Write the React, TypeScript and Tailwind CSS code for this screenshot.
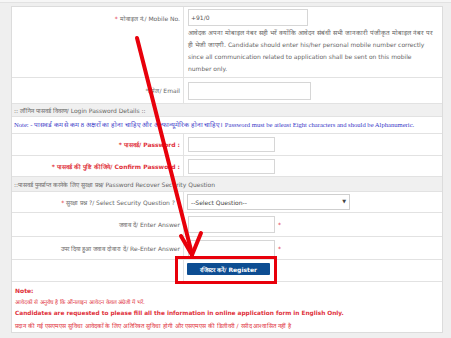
import React from 'react';

const font = "font-['DejaVu_Sans',sans-serif]";

const Label = ({ children, className = '' }: { children: React.ReactNode; className?: string }) => (
    <div className={`w-[172px] shrink-0 border-r border-[#e2e2e2] flex items-center justify-end pr-[3px] text-[6px] text-[#666] ${className}`}>
        {children}
    </div>
);

const Input = ({ w = 'w-[87px]', h = 'h-[16px]', children }: { w?: string; h?: string; children?: React.ReactNode }) => (
    <div className={`${w} ${h} border border-[#d6d6d6] bg-white flex items-center px-[2px] text-[6px] text-[#555]`}>{children}</div>
);

const App = () => {
    return (
        <div className={`relative w-[451px] h-[338px] overflow-hidden bg-[#efefef] ${font}`}>
            <div className="h-[3px] border-b border-[#e2e2e2] bg-[#f6f6f6]" />
            <div className="ml-[11px] mt-[3px] w-[432px] bg-white border border-[#dcdcdc] flex flex-col">
                {/* mobile */}
                <div className="flex h-[71px] border-b border-[#e2e2e2]">
                    <Label className="items-start pt-[7px]">
                        <span className="text-[#e0303a] mr-[2px]">*</span> मोबाइल नं./ Mobile No.
                    </Label>
                    <div className="flex-1 pl-[4px] pt-[2px]">
                        <Input w="w-[120px]" h="h-[17px]">+91/0</Input>
                        <p className="mt-[1px] text-[6px] leading-[12px] text-[#666] whitespace-nowrap">
                            <span className="text-[6.3px]">आवेदक अपना मोबाइल नंबर सही भरें क्योंकि आवेदन संबंधी सभी जानकारी पंजीकृत मोबाइल नंबर पर</span>
                            <br />
                            <span className="text-[6.3px]">ही भेजी जाएगी.</span> Candidate should enter his/her personal mobile number correctly
                            <br />
                            since all communication related to application shall be sent on this mobile
                            <br />
                            number only.
                        </p>
                    </div>
                </div>
                {/* email */}
                <div className="flex h-[26px] border-b border-[#e2e2e2]">
                    <Label>*ईमेल/ Email</Label>
                    <div className="flex-1 pl-[4px] flex items-center">
                        <Input w="w-[123px]" h="h-[18px]" />
                    </div>
                </div>
                <div className="h-[13px] bg-[#f0f0f0] border-b border-[#e2e2e2] flex items-center pl-[2px] text-[6px] text-[#666]">
                    :: लॉगिन पासवर्ड विवरण/ Login Password Details ::
                </div>
                <div className="h-[17px] border-b border-[#e2e2e2] flex items-center pl-[2px] text-[6.6px] text-[#3838c8] font-['Liberation_Serif',serif] whitespace-nowrap">
                    Note: - पासवर्ड कम से कम 8 अक्षरों का होना चाहिए और अल्फान्यूमेरिक होना चाहिए। Password must be atleast Eight characters and should be Alphanumeric.
                </div>
                {/* password */}
                <div className="flex h-[22px] border-b border-[#e2e2e2]">
                    <Label className="text-[#e0303a] font-bold">* पासवर्ड/ Password :</Label>
                    <div className="flex-1 pl-[4px] flex items-center">
                        <Input h="h-[15px]" />
                    </div>
                </div>
                <div className="flex h-[21px] border-b border-[#e2e2e2]">
                    <Label className="text-[#e0303a] font-bold">* पासवर्ड की पुष्टि कीजिये/ Confirm Password :</Label>
                    <div className="flex-1 pl-[4px] flex items-center">
                        <Input h="h-[15px]" />
                    </div>
                </div>
                <div className="h-[15px] bg-[#f0f0f0] border-b border-[#e2e2e2] flex items-center pl-[2px] text-[6px] text-[#666]">
                    ::पासवर्ड पुनर्प्राप्त करनेके लिए सुरक्षा प्रश्न/ Password Recover Security Question
                </div>
                {/* security */}
                <div className="flex h-[21px] border-b border-[#e2e2e2]">
                    <Label className="pr-[8px]">
                        <span className="text-[#e0303a] mr-[2px]">*</span> सुरक्षा प्रश्न ?/ Select Security Question ?
                    </Label>
                    <div className="flex-1 pl-[3px] flex items-center">
                        <div className="w-[163px] h-[16px] border border-[#cfcfcf] bg-white flex items-center justify-between px-[3px] text-[6px] text-[#444]">
                            <span>--Select Question--</span>
                            <span className="text-[5px]">▼</span>
                        </div>
                    </div>
                </div>
                <div className="flex h-[24px] border-b border-[#e2e2e2]">
                    <Label>जवाब दें/ Enter Answer</Label>
                    <div className="flex-1 pl-[4px] flex items-center gap-[3px]">
                        <Input h="h-[17px]" />
                        <span className="text-[#e0303a] text-[6px]">*</span>
                    </div>
                </div>
                <div className="flex h-[23px] border-b border-[#e2e2e2]">
                    <Label>उपर दिया हुआ जवाब दोबारा दें/ Re-Enter Answer</Label>
                    <div className="flex-1 pl-[4px] flex items-center gap-[3px]">
                        <Input h="h-[17px]" />
                        <span className="text-[#e0303a] text-[6px]">*</span>
                    </div>
                </div>
                {/* button */}
                <div className="flex h-[22px] border-b border-[#e2e2e2]">
                    <div className="w-[172px] shrink-0 border-r border-[#e2e2e2]" />
                    <div className="flex-1 pl-[3px] flex items-start pt-[3px]">
                        <button className="w-[83px] h-[12px] bg-[#0d4d92] rounded-[1px] text-white text-[6px] font-bold flex items-center justify-center">
                            रजिस्टर करें/ Register
                        </button>
                    </div>
                </div>
                {/* notes */}
                <div className="h-[50px] pl-[3px] pt-[3px] text-[6px] leading-[11.5px] text-[#e0303a] whitespace-nowrap">
                    <p className="font-bold">Note:</p>
                    <p className="text-[5.7px]">आवेदकों से अनुरोध है कि ऑनलाइन आवेदन केवल अंग्रेजी में भरें.</p>
                    <p className="font-bold text-[5.8px]">Candidates are requested to please fill all the information in online application form in English Only.</p>
                    <p>प्रदान की गई एसएमएस सुविधा आवेदकों के लिए अतिरिक्त सुविधा होगी और एसएमएस की डिलीवरी / रसीद आश्वासित नहीं है</p>
                </div>
            </div>

            {/* annotation: red box around the button */}
            <div className="absolute left-[175px] top-[256px] w-[102px] h-[28px] border-[3px] border-[#e8000b]" />
            {/* annotation: red arrow */}
            <svg className="absolute left-0 top-0" width="451" height="338" viewBox="0 0 451 338">
                <g stroke="#e8000b" strokeWidth="4" strokeLinecap="round" fill="none">
                    <line x1="137" y1="38" x2="192" y2="254" />
                    <line x1="181" y1="236" x2="192" y2="255" />
                    <line x1="201" y1="233" x2="192" y2="255" />
                </g>
            </svg>
        </div>
    );
};

export default App;
